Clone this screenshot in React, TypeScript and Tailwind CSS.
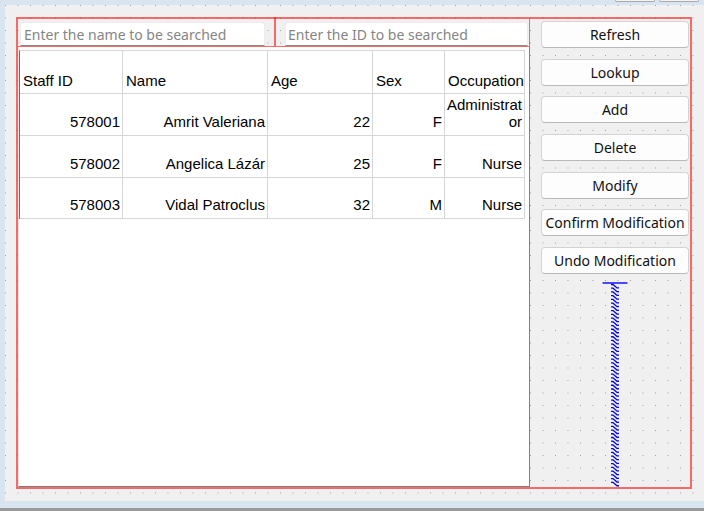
import React from "react";

const cols = ["w-[103px]", "w-[145px]", "w-[105px]", "w-[72px]", "w-[80px]"];
const headers = ["Staff ID", "Name", "Age", "Sex", "Occupation"];
const rows: { h: string; cells: React.ReactNode[] }[] = [
  { h: "h-[42px]", cells: ["578001", "Amrit Valeriana", "22", "F", <>Administrat<br />or</>] },
  { h: "h-[42px]", cells: ["578002", "Angelica Lázár", "25", "F", "Nurse"] },
  { h: "h-[41px]", cells: ["578003", "Vidal Patroclus", "32", "M", "Nurse"] },
];

const buttons: { label: string; mt: string }[] = [
  { label: "Refresh", mt: "mt-[2px]" },
  { label: "Lookup", mt: "mt-[11px]" },
  { label: "Add", mt: "mt-[10px]" },
  { label: "Delete", mt: "mt-[11px]" },
  { label: "Modify", mt: "mt-[11px]" },
  { label: "Confirm Modification", mt: "mt-[10px]" },
  { label: "Undo Modification", mt: "mt-[11px]" },
];

function Spring() {
  const h = 206;
  const items = [];
  for (let i = 0; ; i++) {
    const y = 2.5 + i * 3.75;
    if (y + 3.75 > h) break;
    items.push(
      <path
        key={"b" + i}
        d={`M11 ${y} h2 L17 ${y + 3.5} h2`}
        fill="none"
        stroke="#0000ee"
        strokeWidth={1.3}
      />
    );
  }
  return (
    <svg width={30} height={h} viewBox={`0 0 30 ${h}`} className="block self-center mt-[8px]">
      {items}
      <line x1={2.5} y1={1} x2={27.5} y2={1} stroke="#0000ff" strokeWidth={1.4} />
    </svg>
  );
}

export default function App() {
  return (
    <div className="w-[704px] h-[511px] overflow-hidden bg-[#d8e4f0] flex flex-col">
      {/* top strip */}
      <div className="h-[5px] shrink-0 flex justify-end gap-[4px] pr-[5px]">
        <div className="w-[40px] h-[2px] bg-[#f4f4f4] border-x border-b border-[#a9a9a9] rounded-b-[3px]" />
        <div className="w-[40px] h-[2px] bg-[#f4f4f4] border-x border-b border-[#a9a9a9] rounded-b-[3px]" />
      </div>
      {/* form */}
      <div className="h-[496px] shrink-0 ml-[5px] bg-[#f0f0f0] relative isolate">
        <svg className="absolute inset-0 -z-10 w-full h-full" aria-hidden>
          <defs>
            <pattern id="dots" width="12.5" height="12.5" patternUnits="userSpaceOnUse">
              <rect x="0" y="0" width="1" height="1" fill="#9c9c9c" shapeRendering="crispEdges" />
            </pattern>
          </defs>
          <rect width="100%" height="100%" fill="url(#dots)" />
        </svg>
        {/* layout frame */}
        <div className="mt-[12px] ml-[11px] w-[676px] h-[472px] border-2 border-[rgba(255,0,0,0.56)] flex">
          {/* left column */}
          <div className="w-[512px] flex flex-col">
            <div className="h-[28px] shrink-0 flex border-b border-r border-[rgba(255,0,0,0.56)] pl-[2px] font-['Noto_Sans',sans-serif] text-[14px]">
              <input
                readOnly
                placeholder="Enter the name to be searched"
                className="mt-[3px] w-[245px] h-[24px] bg-white border border-[#ececec] border-b-[#8a8a8a] rounded-t-[3px] pl-[3px] outline-none text-black placeholder:text-[#858585]"
              />
              <div className="w-[20px] pl-[9px]">
                <div className="w-[1.5px] h-full bg-[rgba(255,0,0,0.56)] -mt-[2px] pb-[2px] box-content" />
              </div>
              <input
                readOnly
                placeholder="Enter the ID to be searched"
                className="mt-[3px] w-[243px] h-[24px] bg-white border border-[#ececec] border-b-[#8a8a8a] rounded-t-[3px] pl-[2px] outline-none text-black placeholder:text-[#858585]"
              />
            </div>
            {/* table frame */}
            <div className="flex-1 bg-white border-l border-l-[#e4e4e4] border-r border-r-[#80808a] border-b border-b-[#7c7c7c] pt-[3px] font-['Liberation_Sans',Arial,sans-serif] text-[15px] leading-[17px] text-black">
              <div className="w-[506px] border-l border-l-[#6b6b6b] border-t border-t-[#d6d6d6]">
                <div className="flex h-[43px]">
                  {headers.map((t, i) => (
                    <div
                      key={t}
                      className={`${cols[i]} h-full border-r border-b border-[#d6d6d6] flex items-end pl-[3px] pb-[4px] whitespace-nowrap overflow-hidden`}
                    >
                      {t}
                    </div>
                  ))}
                </div>
                {rows.map((r, ri) => (
                  <div key={ri} className={`flex ${r.h}`}>
                    {r.cells.map((c, i) => (
                      <div
                        key={i}
                        className={`${cols[i]} h-full border-r border-b border-[#d6d6d6] flex items-end justify-end text-right pr-[2px] pb-[5px] whitespace-nowrap`}
                      >
                        <span>{c}</span>
                      </div>
                    ))}
                  </div>
                ))}
              </div>
            </div>
          </div>
          {/* right column */}
          <div className="w-[160px] flex flex-col pl-[11px] pr-[1px] font-['Noto_Sans',sans-serif] text-[14px]">
            {buttons.map((b) => (
              <div
                key={b.label}
                className={`${b.mt} w-[148px] h-[27px] shrink-0 flex items-center justify-center bg-[#fdfdfd] border border-[#d3d3d3] border-b-[#b9b9b9] rounded-[4px] text-[#111] whitespace-nowrap`}
              >
                {b.label}
              </div>
            ))}
            <Spring />
          </div>
        </div>
      </div>
      <div className="h-[7px] shrink-0" />
      <div className="h-[3px] shrink-0 bg-[#9a9a9a]" />
    </div>
  );
}
